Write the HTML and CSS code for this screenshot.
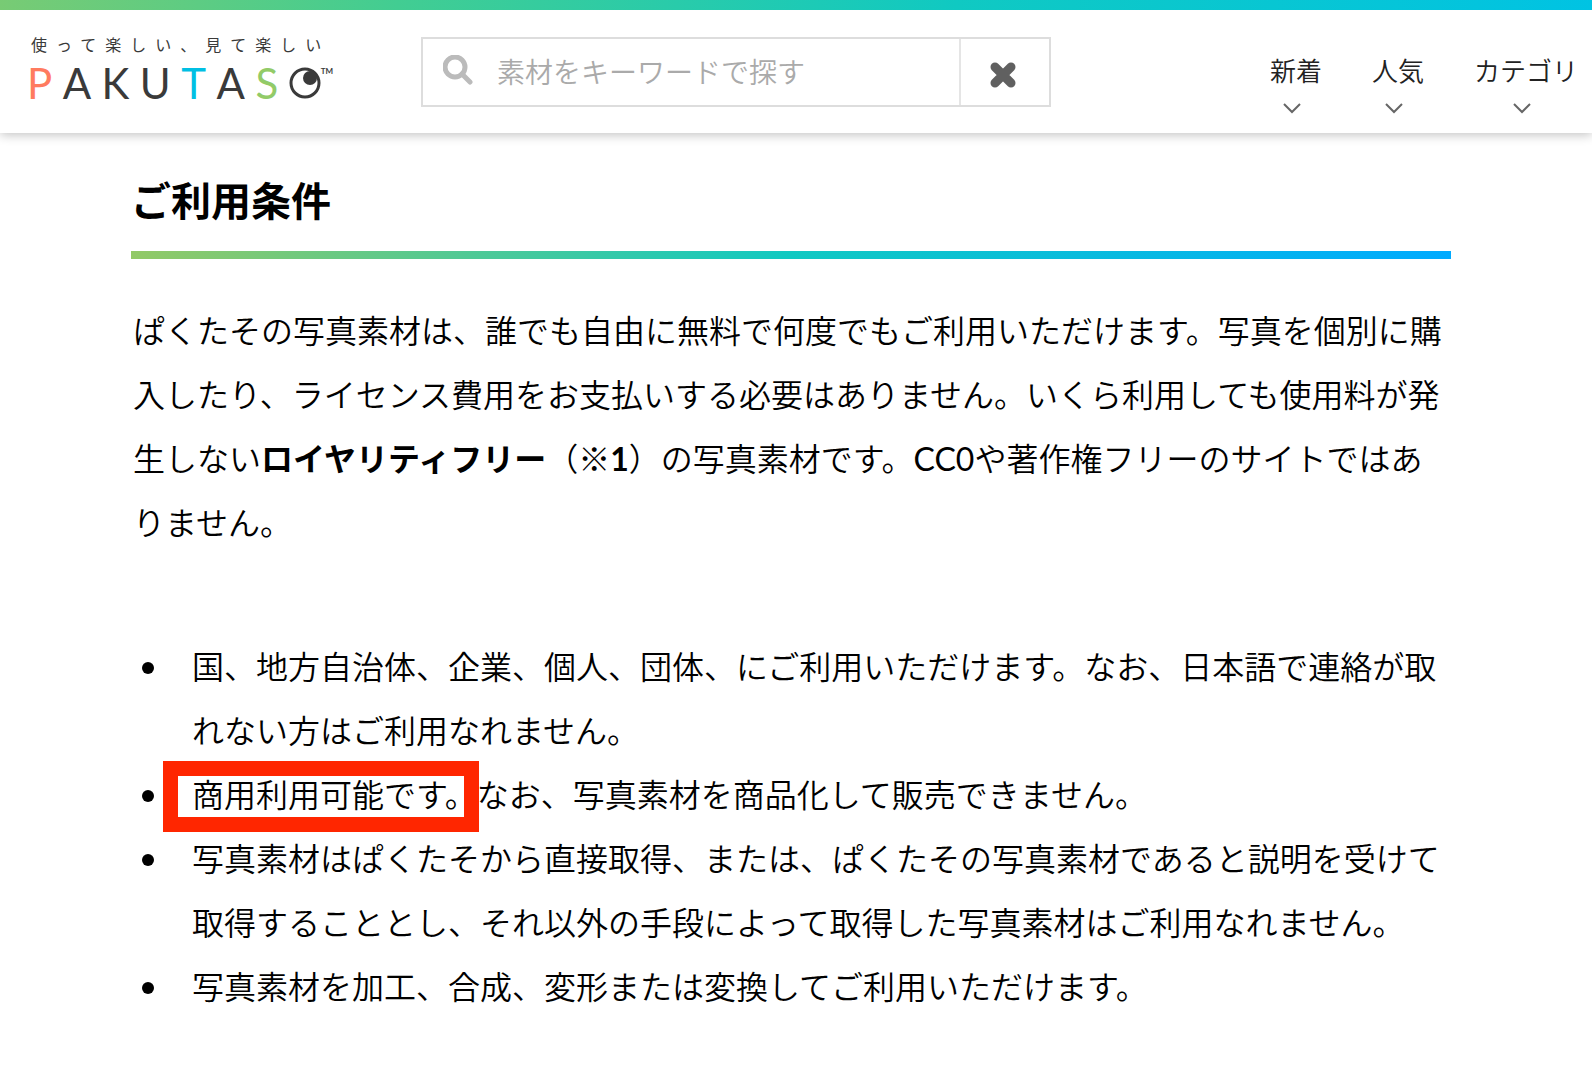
FILE: index.html
```html
<!DOCTYPE html>
<html lang="ja">
<head>
<meta charset="utf-8">
<meta name="viewport" content="width=device-width, initial-scale=1">
<title>ご利用条件 | PAKUTASO</title>
<link rel="stylesheet" href="styles.css">
</head>
<body>
<header class="header">
  <a class="brand" href="#" aria-label="PAKUTASO">
    <span class="tagline">使って楽しい、見て楽しい</span>
    <span class="logo">
      <span class="logo-coral">P</span><span>A</span><span>K</span><span>U</span><span class="logo-blue">T</span><span>A</span><span class="logo-green">S</span>
      <span class="logo-end">
        <svg class="logo-eye" viewBox="0 0 32 32" aria-hidden="true">
          <circle cx="16" cy="16" r="14" fill="none" stroke="#3a3a3a" stroke-width="3"/>
          <circle cx="21" cy="11" r="7" fill="#3a3a3a"/>
        </svg>
        <span class="logo-tm">TM</span>
      </span>
    </span>
  </a>
  <form class="search">
    <svg class="search-icon" viewBox="0 0 30 30" aria-hidden="true">
      <circle cx="12" cy="12" r="10" fill="none" stroke="#bbb" stroke-width="5"/>
      <path d="M19 19L27 27" stroke="#bbb" stroke-width="5" stroke-linecap="round"/>
    </svg>
    <input class="search-input" type="text" aria-label="素材をキーワードで探す" placeholder="素材をキーワードで探す">
    <button class="search-clear" type="reset" aria-label="クリア">
      <svg class="clear-icon" viewBox="0 0 28 28" aria-hidden="true">
        <path d="M6 6L22 22M22 6L6 22" stroke="#606060" stroke-width="8" stroke-linecap="square" stroke-linejoin="round"/>
      </svg>
    </button>
  </form>
  <nav class="nav">
    <a class="nav-item" href="#">新着<svg class="chevron" viewBox="0 0 18 11" aria-hidden="true"><path d="M1 1L9 9L17 1"/></svg></a>
    <a class="nav-item" href="#">人気<svg class="chevron" viewBox="0 0 18 11" aria-hidden="true"><path d="M1 1L9 9L17 1"/></svg></a>
    <a class="nav-item" href="#">カテゴリ<svg class="chevron" viewBox="0 0 18 11" aria-hidden="true"><path d="M1 1L9 9L17 1"/></svg></a>
  </nav>
</header>
<main class="content">
  <h1 class="title">ご利用条件</h1>
  <p class="lead">ぱくたその写真素材は、誰でも自由に無料で何度でもご利用いただけます。写真を個別に購入したり、ライセンス費用をお支払いする必要はありません。いくら利用しても使用料が発生しない<strong>ロイヤリティフリー</strong>（<strong>※1</strong>）の写真素材です。<span class="latin">CC0</span>や著作権フリーのサイトではありません。</p>
  <ul class="terms">
    <li>国、地方自治体、企業、個人、団体、にご利用いただけます。なお、日本語で連絡が取れない方はご利用なれません。</li>
    <li><span class="highlight">商用利用可能です。</span>なお、写真素材を商品化して販売できません。</li>
    <li>写真素材はぱくたそから直接取得、または、ぱくたその写真素材であると説明を受けて取得することとし、それ以外の手段によって取得した写真素材はご利用なれません。</li>
    <li>写真素材を加工、合成、変形または変換してご利用いただけます。</li>
  </ul>
</main>
</body>
</html>
```
FILE: styles.css
```css
* { box-sizing: border-box; }

body {
  margin: 0;
  background: #fff;
  color: #000;
  font-family: Lato, "Noto Sans CJK JP", sans-serif;
  font-size: 32px;
  font-weight: 350;
  line-height: 64px;
}

a { color: inherit; text-decoration: none; }

.header {
  display: flex;
  align-items: flex-start;
  height: 133px;
  padding: 25px 14px 0 31px;
  border-top: 10px solid;
  border-image: linear-gradient(90deg, #78cb74, #42cd92 25%, #10c9c2 60%, #00c3e3) 1;
  border-width: 10px 0 0;
  box-shadow: 0 2px 10px rgba(0, 0, 0, 0.24);
}

.brand {
  display: flex;
  flex-direction: column;
  width: 302px;
  color: #3a3a3a;
}

.tagline {
  font-size: 16px;
  font-weight: 400;
  line-height: 20px;
  letter-spacing: 9px;
  white-space: nowrap;
}

.logo {
  display: flex;
  justify-content: space-between;
  align-items: flex-start;
  margin-left: -4px;
  padding-top: 12px;
  font-size: 42px;
  font-weight: 400;
  line-height: 32px;
}

.logo-coral { color: #ff7b5f; }
.logo-blue { color: #00bfe3; }
.logo-green { color: #92cb68; }
.logo-end { display: flex; align-items: flex-start; }
.logo-eye { width: 32px; height: 32px; }

.logo-tm {
  font-size: 8px;
  font-weight: 700;
  line-height: 8px;
}

.search {
  display: flex;
  flex: 0 1 630px;
  height: 70px;
  margin-left: 88px;
  margin-top: 2px;
  border: 2px solid #ddd;
}

.search-icon {
  flex: none;
  width: 30px;
  height: 30px;
  margin: 16px 24px 0 20px;
}

.search-input {
  flex: 1;
  min-width: 0;
  padding: 0;
  border: 0;
  background: none;
  color: #333;
  font: inherit;
  font-size: 28px;
  line-height: 40px;
}

.search-input::placeholder { color: #aaa; opacity: 1; }

.search-clear {
  flex: none;
  width: 90px;
  padding: 6px 4px 0 0;
  border: 0;
  border-left: 2px solid #e5e5e5;
  background: none;
}

.clear-icon { display: block; width: 28px; height: 28px; margin: 0 auto; }

.clear-icon path { stroke-linecap: round; stroke-width: 9px; }

.nav {
  display: flex;
  gap: 50px;
  margin-left: auto;
  padding-top: 16px;
}

.nav-item {
  display: flex;
  flex-direction: column;
  align-items: center;
  color: #222;
  font-size: 26px;
  line-height: 40px;
  white-space: nowrap;
}

.chevron {
  width: 18px;
  height: 11px;
  margin: 12px 8px 0 0;
  fill: none;
  stroke: #666;
  stroke-width: 2;
}

.content { padding: 36px 141px 48px 131px; }

.title {
  margin: 0;
  padding-bottom: 18px;
  border-bottom: 8px solid;
  border-image: linear-gradient(90deg, #92c966, #10c9c2 50%, #00aaff) 1;
  border-width: 0 0 8px;
  font-size: 40px;
  font-weight: 700;
}

.lead {
  margin: 40px 0 80px;
  padding-left: 2px;
}

strong { font-weight: 700; }

.latin { font-weight: 400; }

.terms {
  margin: 0;
  padding-left: 61px;
  list-style: none;
}

.terms li::before {
  content: "";
  display: inline-block;
  width: 12px;
  height: 12px;
  margin: 0 38px 0 -50px;
  border-radius: 50%;
  background: #000;
  vertical-align: 5px;
}

.highlight {
  position: relative;
  display: inline-block;
}

.highlight::before {
  content: "";
  position: absolute;
  inset: -2px -2px -5px -29px;
  border: 15px solid #ff2600;
}
```
